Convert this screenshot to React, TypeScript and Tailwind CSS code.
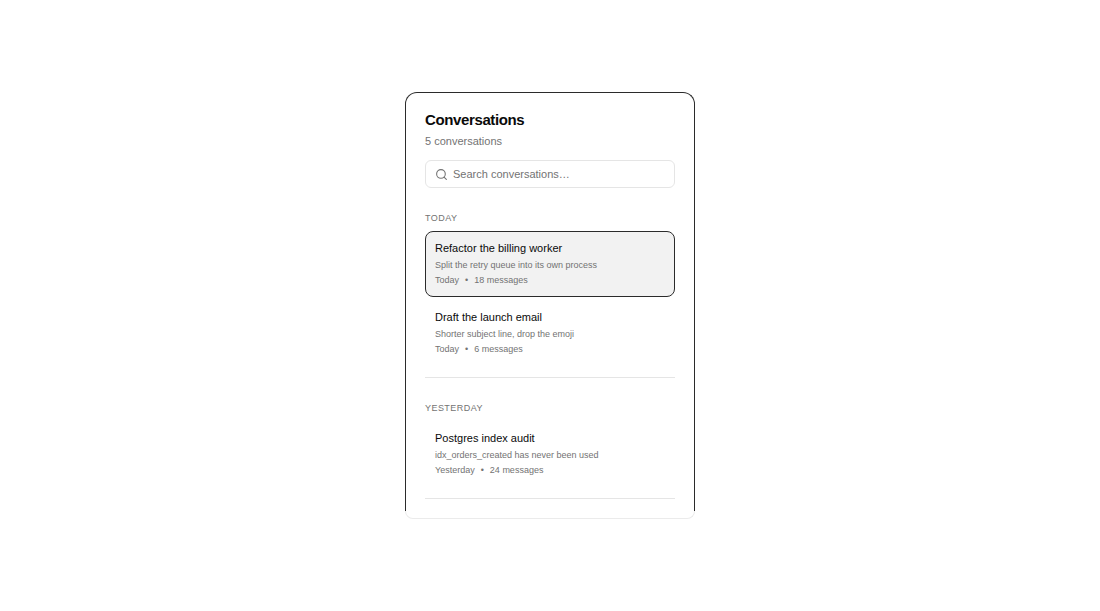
import React from "react";
import { Search } from "lucide-react";

type Conversation = {
  title: string;
  preview: string;
  date: string;
  messages: number;
};

const groups: { label: string; items: Conversation[] }[] = [
  {
    label: "Today",
    items: [
      {
        title: "Refactor the billing worker",
        preview: "Split the retry queue into its own process",
        date: "Today",
        messages: 18,
      },
      {
        title: "Draft the launch email",
        preview: "Shorter subject line, drop the emoji",
        date: "Today",
        messages: 6,
      },
    ],
  },
  {
    label: "Yesterday",
    items: [
      {
        title: "Postgres index audit",
        preview: "idx_orders_created has never been used",
        date: "Yesterday",
        messages: 24,
      },
    ],
  },
];

type ItemProps = {
  item: Conversation;
  active: boolean;
  onSelect: () => void;
};

const ConversationItem = ({ item, active, onSelect }: ItemProps) => {
  return (
    <button
      type="button"
      onClick={onSelect}
      className={`block w-full rounded-lg border px-[9px] py-2 text-left ${
        active ? "border-[#2b2b2b] bg-[#f2f2f2]" : "border-transparent"
      }`}
    >
      <span className="block truncate text-[11px] leading-4 text-[#0a0a0a]">{item.title}</span>
      <span className="mt-px block truncate text-[9px] leading-4 text-[#737373]">{item.preview}</span>
      <span className="flex gap-1.5 text-[9px] leading-[15px] text-[#737373]">
        <span>{item.date}</span>
        <span>•</span>
        <span>{item.messages} messages</span>
      </span>
    </button>
  );
};

const App = () => {
  const [selected, setSelected] = React.useState("Refactor the billing worker");
  const [query, setQuery] = React.useState("");

  return (
    <main className="flex min-h-screen items-center justify-center bg-white font-['Liberation_Sans',Arial,sans-serif]">
      <div className="w-full max-w-[290px]">
        <div className="rounded-t-xl border border-b-0 border-[#2b2b2b] px-[19px] pt-[17px] pb-3">
          {/* Header */}
          <h2 className="text-[15px] leading-5 font-bold tracking-tight text-[#0a0a0a]">Conversations</h2>
          <p className="mt-[3px] text-[11px] leading-4 text-[#737373]">5 conversations</p>
          <label className="mt-[11px] flex h-7 items-center gap-[5px] rounded-md border border-[#e5e5e5] px-[9px]">
            <Search className="size-[13px] text-[#737373]" />
            <input
              type="text"
              aria-label="Search conversations"
              placeholder="Search conversations…"
              value={query}
              onChange={(e) => setQuery(e.target.value)}
              className="min-w-0 flex-1 bg-transparent text-[11px] outline-none placeholder:text-[#737373]"
            />
          </label>
          {/* Groups */}
          {groups.map((group) => (
            <section key={group.label} className="border-b border-[#e5e5e5] pt-[22px] pb-[11px]">
              <h3 className="mb-[5px] text-[9px] leading-4 tracking-wider text-[#737373] uppercase">{group.label}</h3>
              <div className="flex flex-col gap-[3px]">
                {group.items.map((item) => (
                  <ConversationItem
                    key={item.title}
                    item={item}
                    active={item.title === selected}
                    onSelect={() => setSelected(item.title)}
                  />
                ))}
              </div>
            </section>
          ))}
        </div>
        {/* Bottom edge */}
        <div className="h-2 rounded-b-lg border border-t-0 border-[#ebebeb]" />
      </div>
    </main>
  );
};

export default App;
